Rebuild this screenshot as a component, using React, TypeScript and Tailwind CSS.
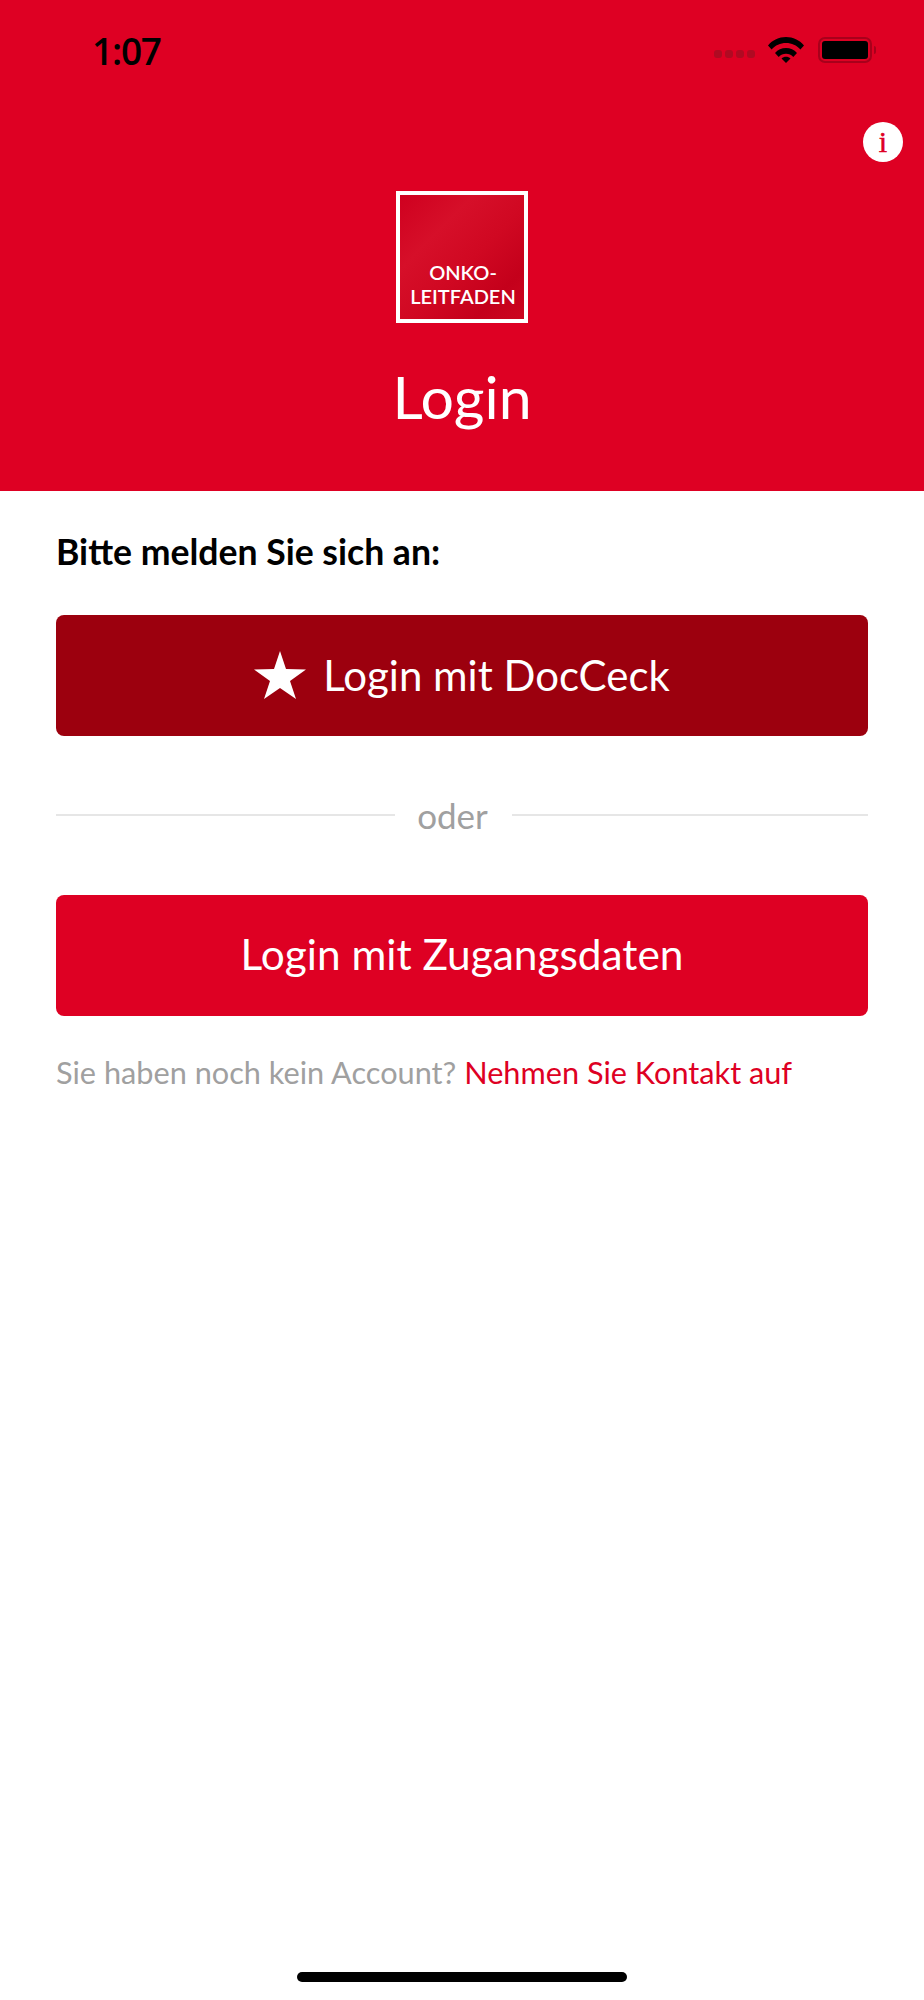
export default function App() {
  return (
    <div className="relative flex h-[2000px] w-[924px] flex-col overflow-hidden bg-white font-['Lato',sans-serif]">
      {/* Header */}
      <header className="relative flex h-[491px] flex-col items-center bg-[#de0023]">
        <div className="flex h-[100px] w-full items-start justify-between pl-[92px] pr-[48px] pt-[29px]">
          <span className="font-['Open_Sans',sans-serif] text-[37px] font-semibold leading-[44px] tracking-[-1.200px] text-black">1:07</span>
          <div className="flex items-center pt-[7px]">
            <div className="mr-[13px] mt-[8px] flex gap-[3px]">
              {[0, 1, 2, 3].map((i) => (
                <span key={i} className="h-[8px] w-[8px] rounded-[3px] bg-[#b00a22]" />
              ))}
            </div>
            <svg width="36" height="27" viewBox="0 0 36 27" className="mr-[14px]">
              <path d="M0 9.500C4.500 4 11 1 18 1s13.500 3 18 8.500l-3.600 4C28.700 9.300 23.700 7 18 7S7.300 9.300 3.600 13.500Z" />
              <path d="M7 17C9.800 13.800 13.700 12 18 12s8.200 1.800 11 5l-3.700 4C23.400 19 20.800 17.800 18 17.800S12.600 19 10.700 21Z" />
              <path d="M13.500 22.500c1.200-1.100 2.800-1.700 4.500-1.700s3.300.6 4.500 1.700L18 27Z" />
            </svg>
            <div className="flex h-[26px] w-[54px] items-center justify-center rounded-[7px] border-2 border-[#a8001b]">
              <div className="h-[18px] w-[46px] rounded-[3px] bg-black" />
            </div>
            <div className="ml-[2px] h-[8px] w-[2px] rounded-r-[2px] bg-[#a8001b]" />
          </div>
        </div>

        <button className="absolute left-[863px] top-[122px] flex h-[40px] w-[40px] items-center justify-center rounded-full bg-white font-['Liberation_Serif',serif] text-[30px] font-normal leading-none text-[#de0023] [-webkit-text-stroke:0.5px_#de0023]">
          i
        </button>

        {/* Logo */}
        <div className="mt-[91px] flex h-[132px] w-[132px] flex-col justify-end border-4 border-white bg-[linear-gradient(135deg,#cf001f_0%,#d60f29_30%,#d00822_55%,#c4001b_80%,#cc0620_100%)] pb-[11px] pl-[2px] text-center text-[20px] font-semibold leading-[24px] text-white">
          <span>ONKO-</span>
          <span>LEITFADEN</span>
        </div>

        <h1 className="mt-[40px] text-[59px] font-normal leading-[68px] text-white">Login</h1>
      </header>

      {/* Login options */}
      <main className="flex flex-col px-[56px] pt-[39px]">
        <p className="text-[35.600px] font-bold leading-[44px] text-black">Bitte melden Sie sich an:</p>

        <button className="mt-[41px] flex h-[121px] items-center justify-center rounded-[8px] bg-[#9c000e] pb-[2px] text-[42px] leading-none text-white">
          <svg width="52" height="48" viewBox="0 0 52 48" className="mr-[17px]" fill="white">
            <polygon points="26,0 32,18 52,18.500 36,30 42,48 26,37 10,48 16,30 0,18.500 20,18" />
          </svg>
          Login mit DocCeck
        </button>

        <div className="mt-[62px] flex items-center">
          <div className="h-[2px] w-[339px] bg-[#e6e6e6]" />
          <span className="w-[117px] pr-[2px] text-center text-[35px] leading-[34px] text-[#a0a0a0]">oder</span>
          <div className="h-[2px] flex-1 bg-[#e6e6e6]" />
        </div>

        <button className="mt-[63px] flex h-[121px] items-center justify-center rounded-[8px] bg-[#de0023] pb-[2px] text-[42.400px] leading-none text-white">
          Login mit Zugangsdaten
        </button>

        <p className="mt-[38px] text-[30.700px] leading-[38px] text-[#a0a0a0]">
          Sie haben noch kein Account? <span className="text-[#de0023]">Nehmen Sie Kontakt auf</span>
        </p>
      </main>

      {/* Home indicator */}
      <div className="absolute bottom-[18px] left-[297px] h-[10px] w-[330px] rounded-full bg-black" />
    </div>
  );
}
